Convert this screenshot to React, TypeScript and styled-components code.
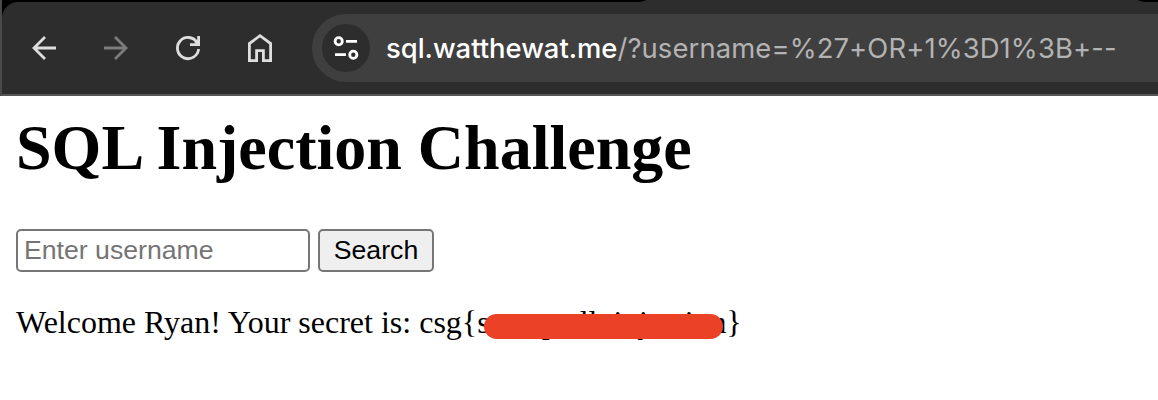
import React from "react";
import styled, { createGlobalStyle } from "styled-components";

const Global = createGlobalStyle`
  * { box-sizing: border-box; }
  body { margin: 0; background: #fff; overflow: hidden; }
`;
const Screen = styled.div`
  width: 1158px;
  height: 400px;
  overflow: hidden;
  background: #fff;
`;
const BrowserFrame = styled.div`
  height: 96px;
  background: #000;
  border-left: 2px solid #4a4a4a;
`;
const TabStrip = styled.div`
  height: 2px;
  padding: 0 14px 0 638px;
`;
const ActiveTab = styled.div`
  height: 2px;
  background: #2d2d2d;
  clip-path: polygon(7px 0, calc(100% - 7px) 0, 100% 100%, 0 100%);
`;
const Toolbar = styled.header`
  height: 94px;
  background: #2d2d2d;
  border-bottom: 2px solid #575556;
  border-top-left-radius: 16px;
  display: flex;
  align-items: center;
  padding-left: 26px;
`;
const NavIcon = styled.svg<{ $dim?: boolean }>`
  width: 32px;
  height: 32px;
  margin-right: 40px;
  flex: none;
  fill: none;
  stroke: ${(p) => (p.$dim ? "#7c7c7c" : "#dedede")};
  stroke-width: 2.8;
`;
const AddressBar = styled.div`
  height: 68px;
  flex: 1;
  margin-left: -4px;
  background: #3f3f3f;
  border-radius: 34px 0 0 34px;
  display: flex;
  align-items: center;
  padding-left: 10px;
`;
const SiteInfo = styled.div`
  width: 48px;
  height: 48px;
  border-radius: 50%;
  background: #2d2d2d;
  display: flex;
  flex: none;
`;
const Url = styled.div`
  margin-left: 16px;
  font: 500 27.4px/40px Inter, sans-serif;
  white-space: nowrap;
  color: #b3b3b3;
`;
const Host = styled.span`
  color: #fff;
`;
const Query = styled.span`
  font-weight: 400;
  letter-spacing: 0.12px;
`;
const Page = styled.main`
  padding: 15px 16px;
  font-family: "Liberation Serif", serif;
  color: #000;
`;
const Title = styled.h1`
  margin: 0;
  font-size: 64px;
  line-height: 74px;
  font-weight: 700;
`;
const Form = styled.form`
  display: flex;
  gap: 8px;
  margin-top: 44px;
`;
const Field = styled.input`
  width: 294px;
  height: 43px;
  border: 2px solid #767676;
  border-radius: 5px;
  padding: 0 6px;
  font: 26.67px "Liberation Sans", sans-serif;
  &::placeholder { color: #757575; }
`;
const Submit = styled.button`
  width: 116px;
  height: 43px;
  border: 2px solid #767676;
  border-radius: 5px;
  background: #efefef;
  padding: 0;
  color: #000;
  font: 26.67px "Liberation Sans", sans-serif;
`;
const Message = styled.p`
  margin: 32px 0 0;
  font-size: 32px;
  line-height: 37px;
  white-space: pre;
  display: flex;
`;
const Secret = styled.span`
  position: relative;
  display: flex;
  width: 249px;
`;
const Space = styled.span<{ $w: number }>`
  width: ${(p) => p.$w}px;
  flex: none;
`;
const Redaction = styled.span`
  position: absolute;
  left: 6.5px;
  top: 10px;
  width: 239.5px;
  height: 25px;
  border-radius: 13px;
  background: #ea4127;
`;

export default function App() {
  return (
    <Screen>
      <Global />
      <BrowserFrame>
        <TabStrip><ActiveTab /></TabStrip>
        <Toolbar>
          <NavIcon viewBox="0 0 32 32"><path d="M28 16H6M17 5 6 16l11 11" /></NavIcon>
          <NavIcon $dim viewBox="0 0 32 32"><path d="M4 16h22M15 5l11 11-11 11" /></NavIcon>
          <NavIcon viewBox="0 0 32 32">
            <path d="M25 10.4A10.6 10.6 0 1 0 26.6 17M26.6 4v8.6H18" />
            <path d="M23.4 9.4l3.2 3.2" />
          </NavIcon>
          <NavIcon viewBox="0 0 32 32"><path d="M5.4 28.6V11.5L16 3.7l10.6 7.8v17.1h-7.2v-10h-6.8v10z" /></NavIcon>
          <AddressBar>
            <SiteInfo>
              <svg width="48" height="48" fill="none" stroke="#fff" strokeWidth="2.8">
                <circle cx="16.7" cy="17.3" r="3.6" />
                <circle cx="31.3" cy="30.7" r="3.6" />
                <path d="M24 17.3h11M13 30.7h11" />
              </svg>
            </SiteInfo>
            <Url><Host>sql.watthewat.me</Host><Query>/?username=%27+OR+1%3D1%3B+--</Query></Url>
          </AddressBar>
        </Toolbar>
      </BrowserFrame>
      <Page>
        <Title>SQL Injection Challenge</Title>
        <Form>
          <Field placeholder="Enter username" />
          <Submit type="button">Search</Submit>
        </Form>
        <Message>
          {"Welcome Ryan! Your secret is: csg{"}
          <Secret>
            s<Space $w={52} />p<Space $w={22} />ll<Space $w={16} />i
            <Space $w={16.5} />j<Space $w={37} />i<Space $w={17} />n
            <Redaction />
          </Secret>
          {"}"}
        </Message>
      </Page>
    </Screen>
  );
}
